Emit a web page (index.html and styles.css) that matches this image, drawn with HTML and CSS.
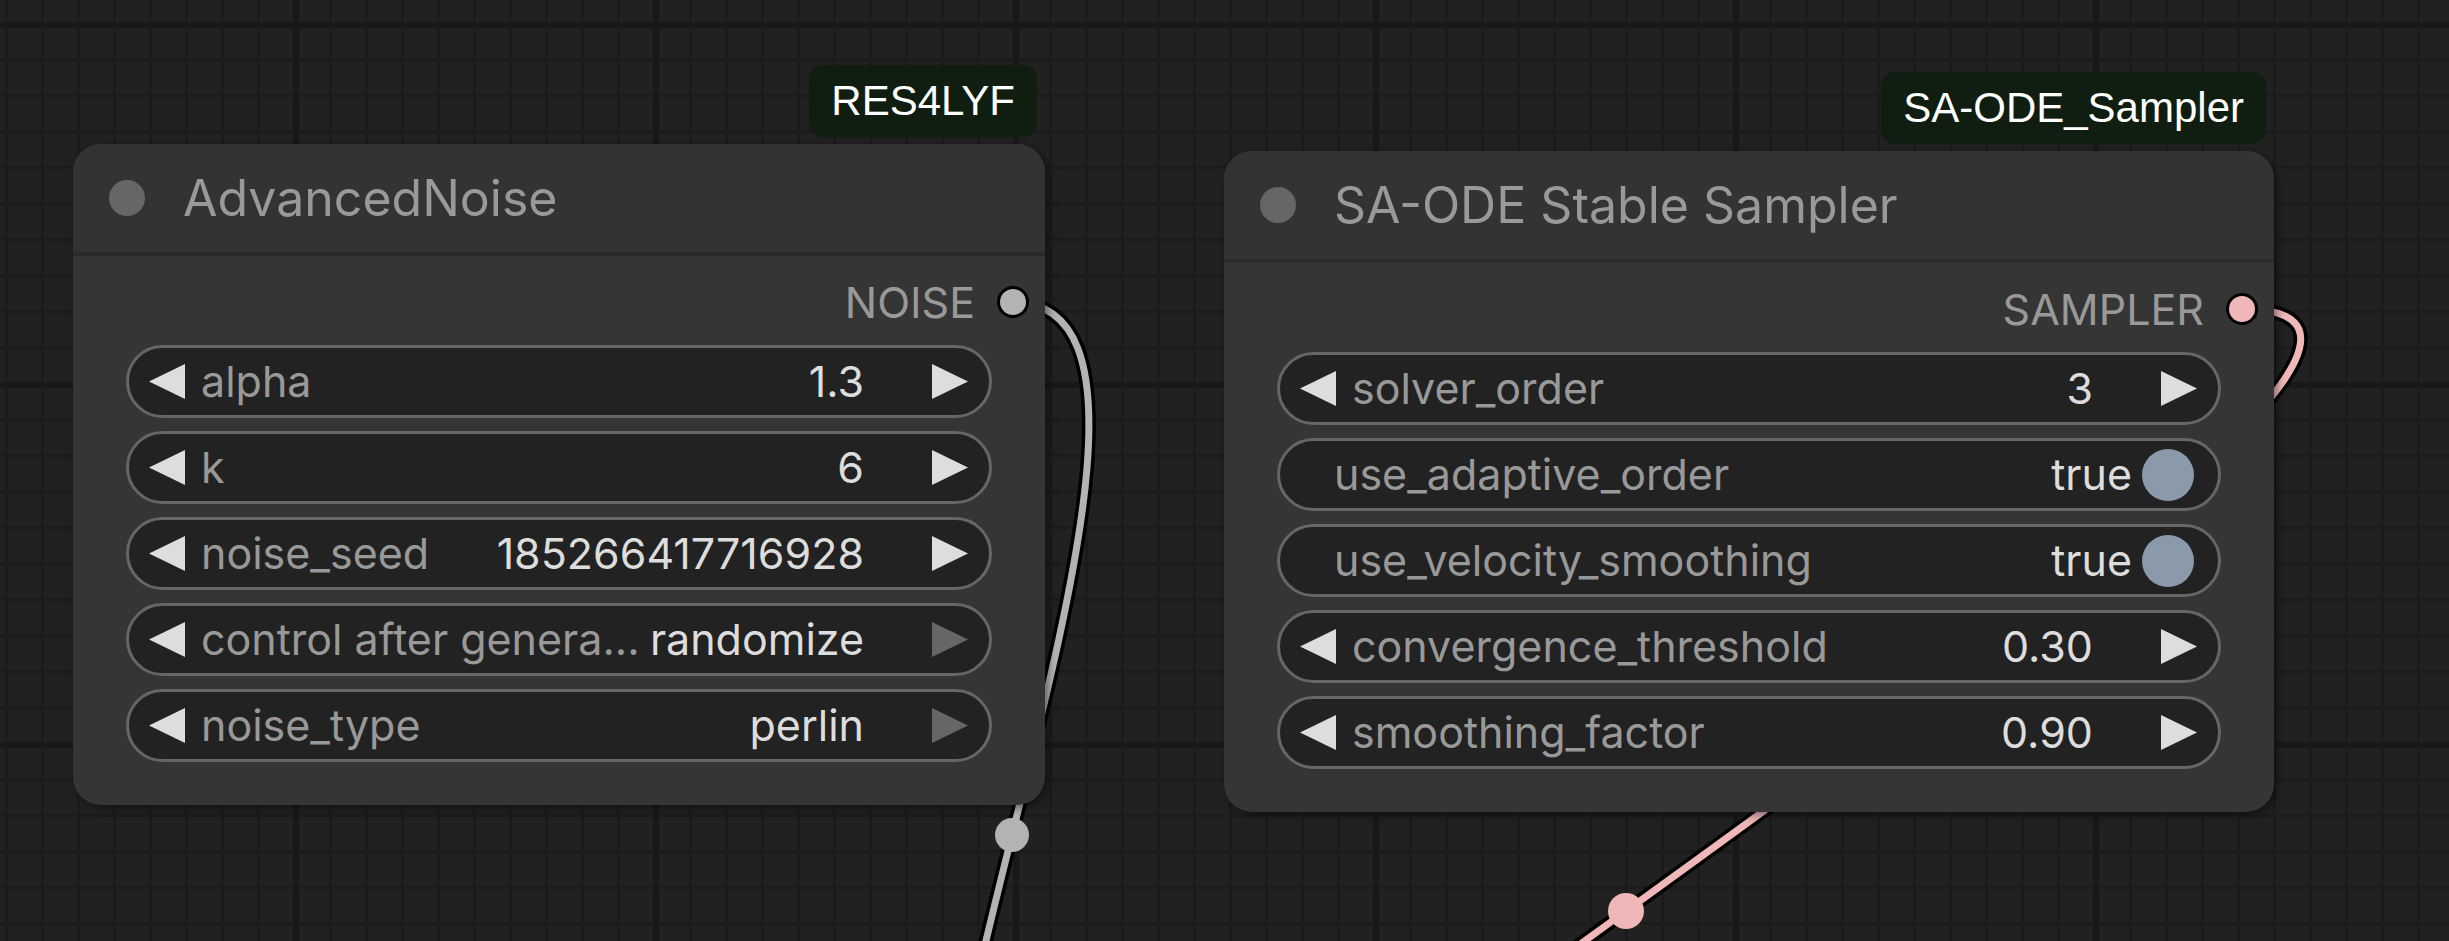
FILE: index.html
```html
<!DOCTYPE html>
<html lang="en">
<head>
<meta charset="utf-8">
<title>Nodes</title>
<link rel="stylesheet" href="styles.css">
</head>
<body>
<div class="canvas">
  <svg class="wires" width="2449" height="941" viewBox="0 0 2449 941">
    <path class="wire-bg" d="M1012 302 C1278.5 302 745.5 1368 1012 1368"/>
    <path class="wire wire-noise" d="M1012 302 C1278.5 302 745.5 1368 1012 1368"/>
    <path class="wire-bg" d="M2242 309 C2672.7 309 579.3 1513 1010 1513"/>
    <path class="wire wire-sampler" d="M2242 309 C2672.7 309 579.3 1513 1010 1513"/>
    <circle class="mark mark-noise" cx="1012" cy="835" r="17"/>
    <circle class="mark mark-sampler" cx="1626" cy="911" r="18"/>
  </svg>

  <div class="group g1">
    <div class="badge">RES4LYF</div>
    <div class="node">
      <div class="title"><span class="dot"></span><span class="title-text">AdvancedNoise</span></div>
      <div class="body">
        <div class="output"><span class="out-label">NOISE</span><span class="slot slot-noise"></span></div>
        <div class="widgets">
          <div class="widget"><span class="arrow left"></span><span class="label">alpha</span><span class="value">1.3</span><span class="arrow right"></span></div>
          <div class="widget"><span class="arrow left"></span><span class="label">k</span><span class="value">6</span><span class="arrow right"></span></div>
          <div class="widget"><span class="arrow left"></span><span class="label">noise_seed</span><span class="value">185266417716928</span><span class="arrow right"></span></div>
          <div class="widget"><span class="arrow left"></span><span class="label">control after genera...</span><span class="value">randomize</span><span class="arrow right dim"></span></div>
          <div class="widget"><span class="arrow left"></span><span class="label">noise_type</span><span class="value">perlin</span><span class="arrow right dim"></span></div>
        </div>
      </div>
    </div>
  </div>

  <div class="group g2">
    <div class="badge">SA-ODE_Sampler</div>
    <div class="node">
      <div class="title"><span class="dot"></span><span class="title-text">SA-ODE Stable Sampler</span></div>
      <div class="body">
        <div class="output"><span class="out-label">SAMPLER</span><span class="slot slot-sampler"></span></div>
        <div class="widgets">
          <div class="widget"><span class="arrow left"></span><span class="label">solver_order</span><span class="value">3</span><span class="arrow right"></span></div>
          <div class="widget toggle"><span class="label">use_adaptive_order</span><span class="value">true</span><span class="knob"></span></div>
          <div class="widget toggle"><span class="label">use_velocity_smoothing</span><span class="value">true</span><span class="knob"></span></div>
          <div class="widget"><span class="arrow left"></span><span class="label">convergence_threshold</span><span class="value">0.30</span><span class="arrow right"></span></div>
          <div class="widget"><span class="arrow left"></span><span class="label">smoothing_factor</span><span class="value">0.90</span><span class="arrow right"></span></div>
        </div>
      </div>
    </div>
  </div>
</div>
</body>
</html>
```
FILE: styles.css
```css
* { box-sizing: border-box; margin: 0; padding: 0; }

html, body {
  width: 2449px;
  height: 941px;
  overflow: hidden;
}

body {
  background-color: #212121;
  background-image:
    linear-gradient(to right, #181818 0 6px, transparent 6px),
    linear-gradient(to bottom, #181818 0 6px, transparent 6px),
    linear-gradient(to right, #1b1b1b 0 3px, transparent 3px),
    linear-gradient(to bottom, #1b1b1b 0 3px, transparent 3px);
  background-size: 360px 100%, 100% 360px, 36px 100%, 100% 36px;
  background-position: 293px 0, 0 22px, 5px 0, 0 22px;
  font-family: Inter, "Noto Sans", sans-serif;
}

.canvas {
  position: relative;
  width: 2449px;
  height: 941px;
}

.wires {
  position: absolute;
  left: 0;
  top: 0;
  z-index: 0;
}

.wire-bg, .wire {
  fill: none;
  stroke-linecap: round;
}
.wire-bg { stroke: #000; stroke-width: 14; }
.wire { stroke-width: 7; }
.wire-noise { stroke: #b3b3b3; }
.wire-sampler { stroke: #efb7b7; }
.mark-noise { fill: #b3b3b3; }
.mark-sampler { fill: #efb7b7; }

.group {
  position: absolute;
  z-index: 1;
  display: flex;
  flex-direction: column;
  align-items: flex-end;
  gap: 7px;
}
.g1 { left: 73px; top: 65px; width: 972px; }
.g2 { left: 1224px; top: 72px; width: 1050px; }

.badge {
  height: 72px;
  margin-right: 8px;
  padding: 0 22px;
  border-radius: 14px;
  background: #0f1e10;
  color: #ffffff;
  font-family: "Liberation Sans", Arial, sans-serif;
  font-size: 42px;
  line-height: 1;
  display: flex;
  align-items: center;
}

.node {
  width: 100%;
  height: 661px;
  background: #353535;
  border-radius: 28px;
  box-shadow: 3px 3px 8px rgba(0, 0, 0, 0.45);
  display: flex;
  flex-direction: column;
}

.title {
  height: 112px;
  flex: none;
  background: #333333;
  border-bottom: 4px solid #2b2b2b;
  border-radius: 28px 28px 0 0;
  display: flex;
  align-items: center;
  padding-left: 36px;
  gap: 38px;
}

.dot {
  width: 36px;
  height: 36px;
  border-radius: 50%;
  background: #666666;
  flex: none;
}

.title-text {
  color: #999999;
  font-size: 50px;
  line-height: 1;
  white-space: nowrap;
}

.body {
  padding: 16px 53px 0;
  display: flex;
  flex-direction: column;
}

.output {
  height: 60px;
  margin: 0 -37px 13px 0;
  display: flex;
  justify-content: flex-end;
  align-items: center;
  gap: 22px;
}

.out-label {
  color: #999999;
  font-size: 43px;
  line-height: 1;
}

.slot {
  width: 32px;
  height: 32px;
  border-radius: 50%;
  border: 3px solid #000;
  flex: none;
}
.slot-noise { background: #b3b3b3; }
.slot-sampler { background: #efb7b7; }

.widgets {
  display: flex;
  flex-direction: column;
  gap: 13px;
}

.widget {
  height: 73px;
  border: 3px solid #666666;
  border-radius: 37px;
  background: #222222;
  display: flex;
  align-items: center;
  padding: 0 21px 0 20px;
  font-size: 43px;
  line-height: 1;
  white-space: nowrap;
}

.arrow {
  width: 36px;
  height: 35px;
  flex: none;
  background: #dddddd;
}
.arrow.left { clip-path: polygon(100% 0, 0 50%, 100% 100%); }
.arrow.right { clip-path: polygon(0 0, 100% 50%, 0 100%); margin-left: 68px; }
.arrow.dim { background: #666666; }

.label {
  color: #999999;
  margin-left: 16px;
}

.value {
  color: #dddddd;
  margin-left: auto;
  padding-left: 8px;
}

.toggle {
  padding: 0 24px 0 54px;
}
.toggle .label { margin-left: 0; }

.knob {
  width: 52px;
  height: 52px;
  border-radius: 50%;
  background: #8a9aab;
  margin-left: 10px;
  flex: none;
}
```
